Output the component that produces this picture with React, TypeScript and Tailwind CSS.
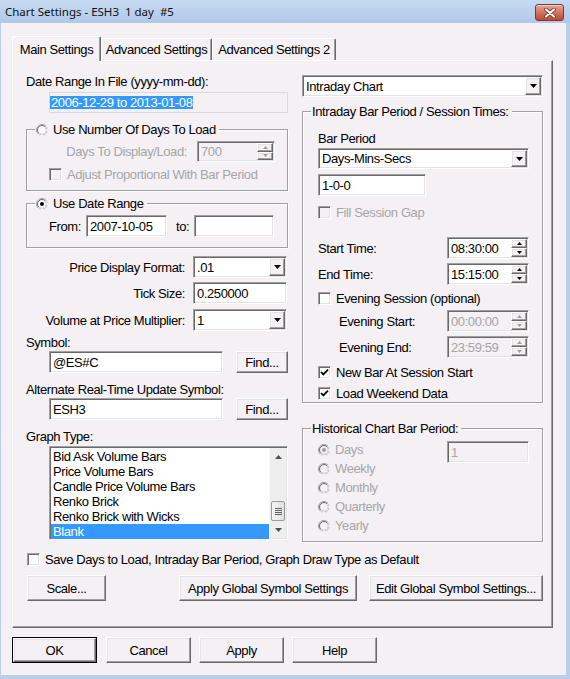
import type { ReactNode } from "react";

// classic 3D bevels
const sunken =
  "border border-t-[#a0a0a0] border-l-[#a0a0a0] border-r-white border-b-white shadow-[inset_1px_1px_0_#696969,inset_-1px_-1px_0_#e3e3e3]";
const raised =
  "border border-t-white border-l-white border-r-[#696969] border-b-[#696969] shadow-[inset_-1px_-1px_0_#a0a0a0,inset_1px_1px_0_#e3e3e3]";
const groove =
  "border border-[#a0a0a0] shadow-[inset_1px_1px_0_#fff,1px_1px_0_#fff]";
const face = "bg-[#f4f0f4]";

function DropArrow() {
  return (
    <svg width="7" height="4" viewBox="0 0 7 4">
      <polygon points="0,0 7,0 3.5,4" fill="#000" />
    </svg>
  );
}

function SpinArrow({ up, dim }: { up?: boolean; dim?: boolean }) {
  return (
    <svg width="5" height="3" viewBox="0 0 5 3">
      <polygon
        points={up ? "0,3 5,3 2.5,0" : "0,0 5,0 2.5,3"}
        fill={dim ? "#a0a0a0" : "#000"}
      />
    </svg>
  );
}

function Edit({
  value,
  className = "",
  disabled = false,
}: {
  value: string;
  className?: string;
  disabled?: boolean;
}) {
  return (
    <div
      className={`${sunken} ${
        disabled ? `${face} text-[#a6a6a6]` : "bg-white"
      } flex items-center pl-[3px] ${className}`}
    >
      {value}
    </div>
  );
}

function Combo({ value, className = "" }: { value: string; className?: string }) {
  return (
    <div className={`${sunken} bg-white flex items-stretch p-px ${className}`}>
      <span className="flex-1 flex items-center pl-[2px]">{value}</span>
      <span className={`${raised} ${face} w-[16px] flex items-center justify-center`}>
        <DropArrow />
      </span>
    </div>
  );
}

function Spin({
  value,
  className = "",
  disabled = false,
}: {
  value: string;
  className?: string;
  disabled?: boolean;
}) {
  return (
    <div
      className={`${sunken} ${
        disabled ? `${face} text-[#a6a6a6]` : "bg-white"
      } flex items-stretch p-px ${className}`}
    >
      <span className="flex-1 flex items-center pl-[2px]">{value}</span>
      <span className="w-[16px] flex flex-col">
        <span className={`${raised} ${face} flex-1 flex items-center justify-center`}>
          <SpinArrow up dim={disabled} />
        </span>
        <span className={`${raised} ${face} flex-1 flex items-center justify-center`}>
          <SpinArrow dim={disabled} />
        </span>
      </span>
    </div>
  );
}

function Check({
  label,
  checked = false,
  disabled = false,
  className = "",
}: {
  label: string;
  checked?: boolean;
  disabled?: boolean;
  className?: string;
}) {
  return (
    <div className={`flex items-center h-[14px] gap-[5px] ${className}`}>
      <span
        className={`${sunken} ${
          disabled ? face : "bg-white"
        } w-[13px] h-[13px] flex items-center justify-center`}
      >
        {checked && (
          <svg width="9" height="9" viewBox="0 0 9 9">
            <path d="M1 4 L3.3 6.4 L8 1.6" stroke="#000" strokeWidth="1.8" fill="none" />
          </svg>
        )}
      </span>
      <span className={disabled ? "text-[#a6a6a6]" : ""}>{label}</span>
    </div>
  );
}

function Radio({ checked = false, disabled = false }: { checked?: boolean; disabled?: boolean }) {
  return (
    <svg width="12" height="12" viewBox="0 0 12 12" className="shrink-0">
      <circle cx="6" cy="6" r="5" fill={disabled ? "#f4f0f4" : "#fff"} />
      <circle cx="6" cy="6" r="5.5" fill="none" stroke="#a0a0a0" />
      <path d="M9.89 2.11 A5.5 5.5 0 0 1 2.11 9.89" fill="none" stroke="#fff" />
      <circle cx="6" cy="6" r="4.5" fill="none" stroke="#696969" />
      <path d="M9.18 2.82 A4.5 4.5 0 0 1 2.82 9.18" fill="none" stroke="#e3e3e3" />
      {checked && <circle cx="6" cy="6" r="2" fill={disabled ? "#a0a0a0" : "#000"} />}
    </svg>
  );
}

function Button({
  children,
  className = "",
  isDefault = false,
}: {
  children: ReactNode;
  className?: string;
  isDefault?: boolean;
}) {
  return (
    <div className={`h-[26px] ${isDefault ? "border border-black" : ""} ${className}`}>
      <div className={`${raised} ${face} h-full flex items-center justify-center`}>
        {children}
      </div>
    </div>
  );
}

function Group({
  legend,
  className = "",
  children,
}: {
  legend: ReactNode;
  className?: string;
  children: ReactNode;
}) {
  return (
    <div className={`relative ${groove} ${className}`}>
      <div className={`absolute left-[8px] top-[-8px] ${face} pl-px pr-[3px] flex items-center gap-[5px] leading-[15px]`}>
        {legend}
      </div>
      {children}
    </div>
  );
}

function Tab({ label, active = false, className = "" }: { label: string; active?: boolean; className?: string }) {
  return (
    <div
      className={`${face} rounded-t-[2px] border-t border-l border-t-white border-l-white border-r border-r-[#696969] shadow-[inset_-1px_0_0_#a0a0a0] flex items-center justify-center ${
        active ? "h-[25px] -mb-px relative z-10" : "h-[22px]"
      } ${className}`}
    >
      {label}
    </div>
  );
}

function Scrollbar() {
  return (
    <div className="w-[17px] flex flex-col bg-[#eeeeee] border-l border-[#f8f8f8]">
      <div className="h-[17px] flex items-center justify-center">
        <svg width="7" height="4" viewBox="0 0 7 4">
          <polygon points="0,4 7,4 3.5,0" fill="#505050" />
        </svg>
      </div>
      <div className="flex-1 flex flex-col justify-end px-px">
        <div className="h-[20px] rounded-[2px] border border-[#9a9a9a] bg-gradient-to-r from-[#f4f4f4] to-[#e0e0e0] flex flex-col items-center justify-center gap-px">
          <span className="w-[7px] h-px bg-[#606060]" />
          <span className="w-[7px] h-px bg-[#606060]" />
          <span className="w-[7px] h-px bg-[#606060]" />
          <span className="w-[7px] h-px bg-[#606060]" />
        </div>
      </div>
      <div className="h-[17px] flex items-center justify-center">
        <svg width="7" height="4" viewBox="0 0 7 4">
          <polygon points="0,0 7,0 3.5,4" fill="#505050" />
        </svg>
      </div>
    </div>
  );
}

const graphTypes = [
  "Bid Ask Volume Bars",
  "Price Volume Bars",
  "Candle Price Volume Bars",
  "Renko Brick",
  "Renko Brick with Wicks",
  "Blank",
];

function LeftColumn() {
  return (
    <div className="w-[262px] flex flex-col">
      <p className="mt-[13px]">Date Range In File (yyyy-mm-dd):</p>
      <div className="mt-[3px] ml-[23px] w-[239px] h-[21px] border border-[#dadada] flex items-center">
        <span className="bg-[#3399ff] text-white leading-[13px] pl-px pr-[1px]">
          2006-12-29 to 2013-01-08
        </span>
      </div>

      <Group
        className="mt-[16px] h-[62px] pt-[11px]"
        legend={
          <>
            <Radio />
            <span>Use Number Of Days To Load</span>
          </>
        }
      >
        <div className="h-[21px] flex items-center justify-end gap-[10px] pr-[12px]">
          <span className="text-[#a6a6a6]">Days To Display/Load:</span>
          <Spin value="700" disabled className="w-[78px] h-[21px]" />
        </div>
        <Check label="Adjust Proportional With Bar Period" disabled className="mt-[5px] ml-[22px]" />
      </Group>

      <Group
        className="mt-[12px] h-[45px] pt-[11px]"
        legend={
          <>
            <Radio checked />
            <span>Use Date Range</span>
          </>
        }
      >
        <div className="h-[22px] flex items-center pl-[22px]">
          <span className="w-[37px]">From:</span>
          <Edit value="2007-10-05" className="w-[81px] h-[22px]" />
          <span className="ml-[9px] w-[18px]">to:</span>
          <Edit value="" className="w-[80px] h-[22px]" />
        </div>
      </Group>

      <div className="mt-[8px] h-[22px] flex items-center justify-end gap-[8px] pr-px">
        <span>Price Display Format:</span>
        <Combo value=".01" className="w-[94px] h-[22px]" />
      </div>
      <div className="mt-[4px] h-[22px] flex items-center justify-end gap-[8px] pr-px">
        <span>Tick Size:</span>
        <Edit value="0.250000" className="w-[94px] h-[22px]" />
      </div>
      <div className="mt-[5px] h-[22px] flex items-center justify-end gap-[8px] pr-px">
        <span>Volume at Price Multiplier:</span>
        <Combo value="1" className="w-[94px] h-[22px]" />
      </div>

      <p className="mt-[4px]">Symbol:</p>
      <div className="mt-px h-[22px] flex items-center pl-[23px]">
        <Edit value="@ES#C" className="w-[174px] h-[22px]" />
        <Button className="ml-[13px] w-[52px] !h-[22px]">Find...</Button>
      </div>

      <p className="mt-[9px]">Alternate Real-Time Update Symbol:</p>
      <div className="mt-px h-[22px] flex items-center pl-[23px]">
        <Edit value="ESH3" className="w-[174px] h-[22px]" />
        <Button className="ml-[13px] w-[52px] !h-[22px]">Find...</Button>
      </div>

      <p className="mt-[9px]">Graph Type:</p>
      <div className={`${sunken} bg-white mt-[2px] ml-[23px] w-[239px] h-[94px] flex p-px`}>
        <div className="flex-1 flex flex-col pt-px">
          {graphTypes.map((g) => (
            <div
              key={g}
              className={`h-[15px] leading-[15px] pl-[2px] ${
                g === "Blank" ? "bg-[#3399ff] text-white" : ""
              }`}
            >
              {g}
            </div>
          ))}
        </div>
        <Scrollbar />
      </div>
    </div>
  );
}

function RightColumn() {
  return (
    <div className="ml-[14px] w-[241px] flex flex-col">
      <Combo value="Intraday Chart" className="mt-[14px] h-[22px]" />

      <Group
        className="mt-[14px] h-[292px] pl-[15px]"
        legend={<span>Intraday Bar Period / Session Times:</span>}
      >
        <p className="mt-[19px]">Bar Period</p>
        <Combo value="Days-Mins-Secs" className="mt-[2px] w-[211px] h-[21px]" />
        <Edit value="1-0-0" className="mt-[5px] w-[108px] h-[22px]" />
        <Check label="Fill Session Gap" disabled className="mt-[9px]" />

        <div className="mt-[18px] h-[22px] flex items-center">
          <span className="w-[129px]">Start Time:</span>
          <Spin value="08:30:00" className="w-[82px] h-[22px]" />
        </div>
        <div className="mt-[4px] h-[22px] flex items-center">
          <span className="w-[129px]">End Time:</span>
          <Spin value="15:15:00" className="w-[82px] h-[22px]" />
        </div>

        <Check label="Evening Session (optional)" className="mt-[6px]" />
        <div className="mt-[5px] h-[22px] flex items-center">
          <span className="w-[129px] pl-[21px]">Evening Start:</span>
          <Spin value="00:00:00" disabled className="w-[82px] h-[22px]" />
        </div>
        <div className="mt-[4px] h-[22px] flex items-center">
          <span className="w-[129px] pl-[21px]">Evening End:</span>
          <Spin value="23:59:59" disabled className="w-[82px] h-[22px]" />
        </div>

        <Check label="New Bar At Session Start" checked className="mt-[7px]" />
        <Check label="Load Weekend Data" checked className="mt-[7px]" />
      </Group>

      <Group
        className="mt-[25px] h-[114px] pl-[15px] flex"
        legend={<span>Historical Chart Bar Period:</span>}
      >
        <div className="w-[129px] mt-[11px] flex flex-col text-[#a6a6a6]">
          {["Days", "Weekly", "Monthly", "Quarterly", "Yearly"].map((p, i) => (
            <div key={p} className="h-[19px] flex items-center gap-[5px]">
              <Radio checked={i === 0} disabled />
              <span>{p}</span>
            </div>
          ))}
        </div>
        <Edit value="1" disabled className="mt-[12px] w-[82px] h-[22px]" />
      </Group>
    </div>
  );
}

export default function App() {
  return (
    <div className="w-[570px] h-[679px] flex flex-col bg-[#b7cfeb] text-black text-[13px] leading-[15px] tracking-[-0.4px] font-['Liberation_Sans',Arial,sans-serif]">
      {/* caption */}
      <div className="h-[23px] shrink-0 flex items-center justify-between bg-gradient-to-b from-[#c6daf1] to-[#b0c9e8] pl-[5px] pr-[6px]">
        <span className="font-['Noto_Sans',sans-serif] text-[11.5px] tracking-normal text-[#111]">
          Chart Settings - ESH3&nbsp; 1 day&nbsp; #5
        </span>
        <div className="w-[29px] h-[17px] mt-[2px] rounded-[3px] border border-[#7d3a30] bg-gradient-to-b from-[#e8a698] via-[#d4735f] to-[#c0472f] flex items-center justify-center shadow-[inset_0_1px_0_#f3c9bf]">
          <svg width="12" height="10" viewBox="0 0 12 10">
            <path d="M2 1.5 L10 8.5 M10 1.5 L2 8.5" stroke="#5a2a24" strokeWidth="3.6" strokeLinecap="round" />
            <path d="M2 1.5 L10 8.5 M10 1.5 L2 8.5" stroke="#fff" strokeWidth="2.2" strokeLinecap="round" />
          </svg>
        </div>
      </div>

      {/* client area */}
      <div className={`flex-1 ml-px mr-[4px] mb-[4px] ${face} flex flex-col`}>
        <div className="mt-[13px] h-[24px] ml-[11px] flex items-end">
          <Tab label="Main Settings" active className="w-[89px]" />
          <Tab label="Advanced Settings" className="w-[111px]" />
          <Tab label="Advanced Settings 2" className="w-[124px]" />
        </div>

        <div className="ml-[11px] w-[541px] h-[568px] border border-t-white border-l-white border-r-[#696969] border-b-[#696969] shadow-[inset_-1px_-1px_0_#a0a0a0] flex flex-col pl-[13px]">
          <div className="flex">
            <LeftColumn />
            <RightColumn />
          </div>
          <Check
            label="Save Days to Load, Intraday Bar Period, Graph Draw Type as Default"
            className="mt-[10px] ml-px"
          />
          <div className="mt-[9px] flex">
            <Button className="ml-px w-[79px]">Scale...</Button>
            <Button className="ml-[73px] w-[178px]">Apply Global Symbol Settings</Button>
            <Button className="ml-[12px] w-[174px]">Edit Global Symbol Settings...</Button>
          </div>
        </div>

        <div className="mt-[9px] ml-[11px] flex">
          <Button isDefault className="w-[85px]">OK</Button>
          <Button className="ml-[9px] w-[85px]">Cancel</Button>
          <Button className="ml-[8px] w-[85px]">Apply</Button>
          <Button className="ml-[8px] w-[85px]">Help</Button>
        </div>
      </div>
    </div>
  );
}
